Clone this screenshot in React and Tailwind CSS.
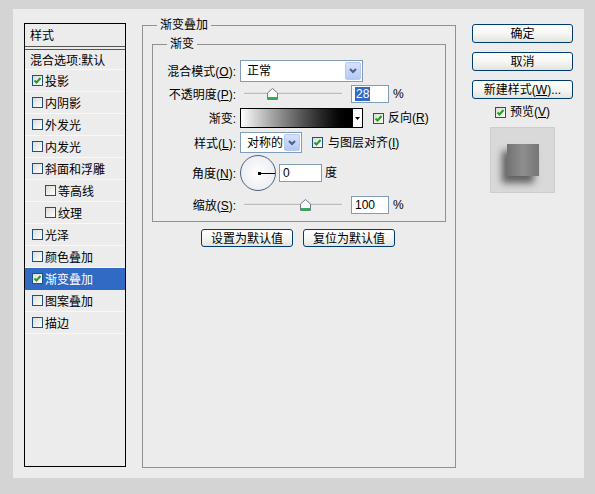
import React from 'react'

/* ── Small XP-style widgets ─────────────────────────────── */
function Check({ on }) {
  return (
    <span className="flex h-[11px] w-[11px] shrink-0 items-center justify-center border border-[#1c5180] bg-linear-to-br from-[#dcdcd6] to-white">
      {on && (
        <svg width="9" height="9" viewBox="0 0 9 9">
          <path d="M1.5 4.5 L3.5 6.5 L7.5 2" fill="none" stroke="#21a121" strokeWidth="2" />
        </svg>
      )}
    </span>
  )
}

function Key({ k }) {
  return (
    <>
      (<span className="underline underline-offset-1">{k}</span>)
    </>
  )
}

function DropBtn() {
  return (
    <span className="flex h-full w-[16px] items-center justify-center rounded-[2px] border border-[#b9cbf3] bg-linear-to-b from-[#d6e2fc] to-[#b3c8f5]">
      <svg width="8" height="6" viewBox="0 0 8 6">
        <path d="M1 1 L4 4 L7 1" fill="none" stroke="#4d6185" strokeWidth="2" />
      </svg>
    </span>
  )
}

function Thumb() {
  return (
    <svg width="11" height="12" viewBox="0 0 11 12">
      <path d="M5.5 0.5 L10.5 5 L10.5 11.5 L0.5 11.5 L0.5 5 Z" fill="#fbfbfb" stroke="#6d7b8d" />
      <rect x="1" y="9" width="9" height="2.5" fill="#2fb24a" />
    </svg>
  )
}

function Slider({ pos }) {
  // pos = thumb left offset (px) inside the 106px slider
  return (
    <div className="relative h-full w-[106px]">
      <div className="absolute left-[4px] right-[4px] top-1/2 h-[3px] -translate-y-1/2 rounded-full border-t border-[#9c9c9c] bg-[#dcdcdc] border-b border-b-white" />
      <div className="absolute top-1/2 -translate-y-1/2" style={{ left: pos }}>
        <Thumb />
      </div>
    </div>
  )
}

function Btn({ children, w = 'w-[101px]', h = 'h-[19px]' }) {
  return (
    <button className={`${w} ${h} flex items-center justify-center rounded-[3px] border border-[#003c74] bg-linear-to-b from-white via-[#f6f6f4] to-[#e3e3de] pt-px text-[12px] leading-none text-black`}>
      {children}
    </button>
  )
}

/* ── Left style list ────────────────────────────────────── */
const ITEMS = [
  { t: '投影', on: true },
  { t: '内阴影' },
  { t: '外发光' },
  { t: '内发光' },
  { t: '斜面和浮雕' },
  { t: '等高线', sub: true },
  { t: '纹理', sub: true },
  { t: '光泽' },
  { t: '颜色叠加' },
  { t: '渐变叠加', on: true, sel: true },
  { t: '图案叠加' },
  { t: '描边' },
]

function StyleList() {
  return (
    <div className="flex h-[444px] w-[102px] shrink-0 flex-col border border-black bg-[#ececec]">
      <div className="flex h-[26px] items-center border-b-[4px] border-double border-[#555] pl-[5px] pt-[2px]">样式</div>
      <div className="flex h-[20px] items-center border-b border-[#f8f8f8] pl-[5px] pt-[2px]">混合选项:默认</div>
      {ITEMS.map(it => (
        <div
          key={it.t}
          className={`flex h-[22px] items-center gap-[2px] border-b ${
            it.sel ? 'border-[#316ac5] bg-[#316ac5] text-white' : 'border-[#f8f8f8]'
          } ${it.sub ? 'pl-[20px]' : 'pl-[7px]'}`}
        >
          <Check on={it.on} />
          <span className="translate-y-[1px]">{it.t}</span>
        </div>
      ))}
    </div>
  )
}

/* ── Group box with title on the border ─────────────────── */
function Title({ children }) {
  return (
    <span className="absolute -top-[8px] left-[14px] bg-[#ececec] px-[3px] leading-[14px]">{children}</span>
  )
}

function Label({ children }) {
  return <div className="w-[84px] shrink-0 translate-y-[1px] pr-[1px] text-right">{children}</div>
}

function Field({ children, w }) {
  return (
    <div className={`${w} flex h-[18px] items-center border border-[#7f9db9] bg-white pl-[3px]`}>{children}</div>
  )
}

function GradientPanel() {
  return (
    <div className="relative ml-[16px] mt-[2px] flex h-[443px] w-[314px] shrink-0 flex-col border border-[#919191]">
      <Title>渐变叠加</Title>

      <div className="relative mx-[9px] mt-[18px] border border-[#919191] pb-[6px]">
        <Title>渐变</Title>

        {/* 混合模式 */}
        <div className="mt-[15px] flex h-[22px] items-center">
          <Label>混合模式<Key k="O" />:</Label>
          <div className="ml-[3px] flex h-[22px] w-[123px] items-center justify-between border border-[#7f9db9] bg-white p-[1px] pl-[6px]">
            <span>正常</span>
            <DropBtn />
          </div>
        </div>

        {/* 不透明度 */}
        <div className="mt-[2px] flex h-[20px] items-center">
          <Label>不透明度<Key k="P" />:</Label>
          <div className="ml-[3px] h-full">
            <Slider pos={27} />
          </div>
          <div className="ml-[5px]">
            <Field w="w-[38px]">
              <span className="bg-[#316ac5] px-[1px] text-white">28</span>
            </Field>
          </div>
          <span className="ml-[4px]">%</span>
        </div>

        {/* 渐变 */}
        <div className="mt-[4px] flex h-[20px] items-center">
          <Label>渐变:</Label>
          <div className="ml-[3px] flex h-[20px] w-[123px] border border-black">
            <div className="flex-1 bg-linear-to-r from-white to-black" />
            <div className="flex w-[10px] items-center justify-center border-l border-black bg-white">
              <svg width="5" height="3" viewBox="0 0 5 3">
                <path d="M0 0 L5 0 L2.5 3 Z" fill="#000" />
              </svg>
            </div>
          </div>
          <div className="ml-[10px] flex items-center gap-[4px]">
            <Check on />
            <span>反向<Key k="R" /></span>
          </div>
        </div>

        {/* 样式 */}
        <div className="mt-[4px] flex h-[21px] items-center">
          <Label>样式<Key k="L" />:</Label>
          <div className="ml-[3px] flex h-[21px] w-[62px] items-center justify-between border border-[#7f9db9] bg-white p-[1px] pl-[6px]">
            <span>对称的</span>
            <DropBtn />
          </div>
          <div className="ml-[10px] flex items-center gap-[5px]">
            <Check on />
            <span>与图层对齐<Key k="I" /></span>
          </div>
        </div>

        {/* 角度 */}
        <div className="mt-[2px] flex h-[36px] items-center">
          <Label>角度<Key k="N" />:</Label>
          <div className="ml-[3px] flex h-[36px] w-[36px] items-center justify-end rounded-full border-[1.5px] border-[#4f5f7f] bg-radial from-white to-[#e6e8ee]">
            <div className="flex w-[17px] items-center">
              <span className="h-[3px] w-[3px] bg-black" />
              <span className="h-px flex-1 bg-black" />
            </div>
          </div>
          <div className="ml-[3px]">
            <Field w="w-[43px]">0</Field>
          </div>
          <span className="ml-[3px]">度</span>
        </div>

        {/* 缩放 */}
        <div className="mt-[4px] flex h-[20px] items-center">
          <Label>缩放<Key k="S" />:</Label>
          <div className="ml-[3px] h-full">
            <Slider pos={60} />
          </div>
          <div className="ml-[5px]">
            <Field w="w-[38px]">100</Field>
          </div>
          <span className="ml-[4px]">%</span>
        </div>
      </div>

      <div className="mt-[7px] flex justify-center gap-[10px] pr-[2px]">
        <Btn w="w-[92px]" h="h-[18px]">设置为默认值</Btn>
        <Btn w="w-[92px]" h="h-[18px]">复位为默认值</Btn>
      </div>
    </div>
  )
}

/* ── Right column ───────────────────────────────────────── */
function Actions() {
  return (
    <div className="ml-[16px] mt-[1px] flex w-[101px] shrink-0 flex-col items-center">
      <Btn>确定</Btn>
      <div className="mt-[9px]"><Btn>取消</Btn></div>
      <div className="mt-[9px]"><Btn>新建样式<Key k="W" />...</Btn></div>
      <div className="mt-[5px] flex h-[16px] items-center gap-[4px]">
        <Check on />
        <span>预览<Key k="V" /></span>
      </div>
      <div className="mt-[7px] flex h-[66px] w-[65px] border border-[#cdcdcd] bg-[#d9d9d9] pl-[16px] pt-[16px]">
        <div className="h-[32px] w-[32px] bg-linear-to-r from-[#727272] via-[#8e8e8e] to-[#767676] shadow-[-5px_7px_7px_rgba(0,0,0,0.55)]" />
      </div>
    </div>
  )
}

export default function App() {
  return (
    <div className="h-[494px] w-[595px] bg-[#d4d4d4] pl-[13px] pt-[9px] font-['Liberation_Sans','Noto_Sans_CJK_SC',sans-serif] text-[12px] leading-[14px] text-black">
      <div className="flex h-[469px] w-[571px] items-start bg-[#ececec] pl-[11px] pt-[14px]">
        <StyleList />
        <GradientPanel />
        <Actions />
      </div>
    </div>
  )
}
